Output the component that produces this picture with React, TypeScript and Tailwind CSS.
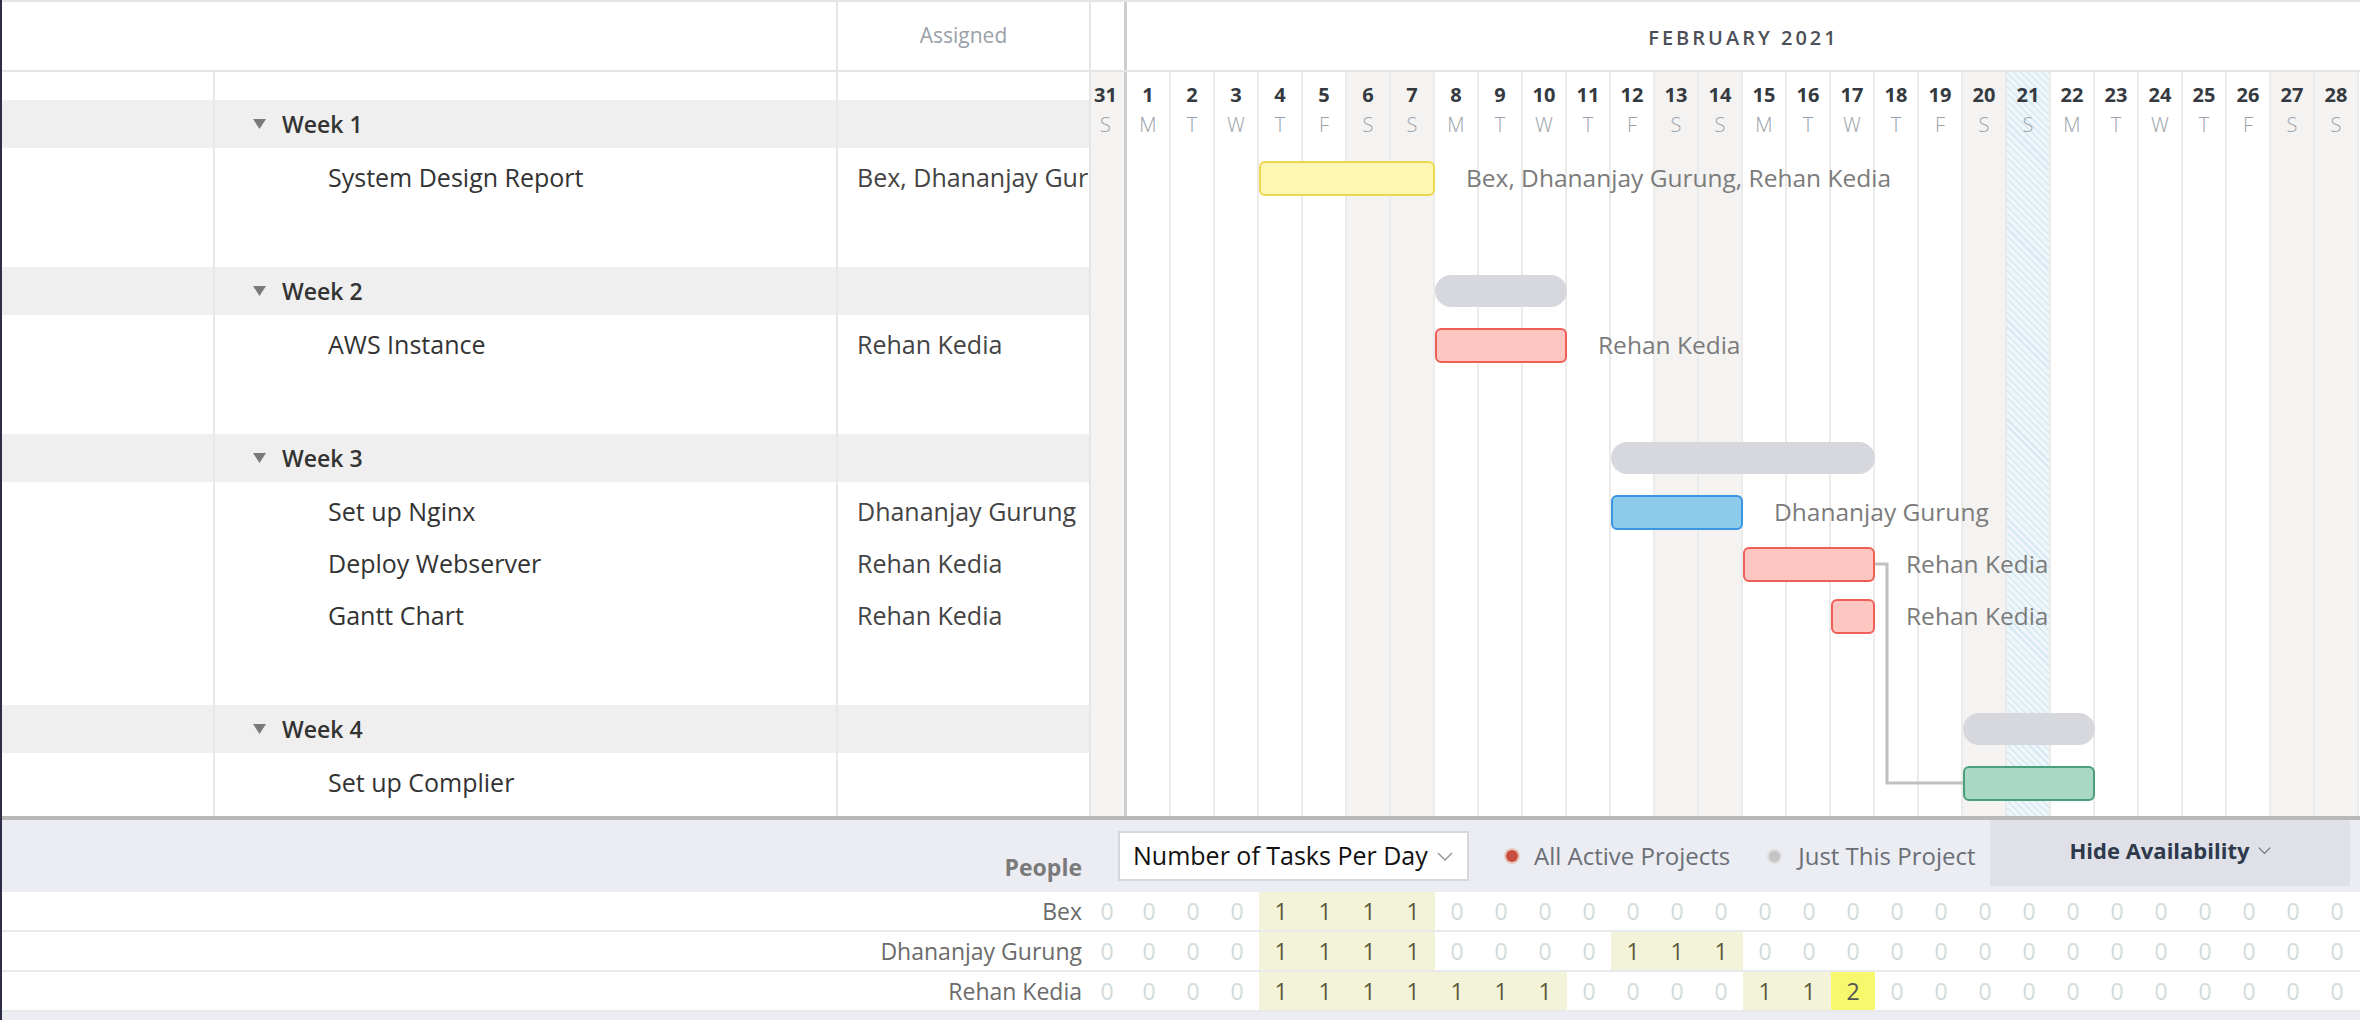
import { ReactElement } from "react";

type BarColor = "yellow" | "red" | "blue" | "green";

type Task = {
  name: string;
  assigned: string;
  start: number;
  end: number;
  color: BarColor;
};

type Group = {
  name: string;
  summary?: [number, number];
  tasks: Task[];
};

const FIRST = 36;
const DAY = 44;
const dayX = (d: number) => FIRST + (d - 1) * DAY;

const groups: Group[] = [
  {
    name: "Week 1",
    tasks: [
      {
        name: "System Design Report",
        assigned: "Bex, Dhananjay Gurung, Rehan Kedia",
        start: 4,
        end: 7,
        color: "yellow",
      },
    ],
  },
  {
    name: "Week 2",
    summary: [8, 10],
    tasks: [{ name: "AWS Instance", assigned: "Rehan Kedia", start: 8, end: 10, color: "red" }],
  },
  {
    name: "Week 3",
    summary: [12, 17],
    tasks: [
      { name: "Set up Nginx", assigned: "Dhananjay Gurung", start: 12, end: 14, color: "blue" },
      { name: "Deploy Webserver", assigned: "Rehan Kedia", start: 15, end: 17, color: "red" },
      { name: "Gantt Chart", assigned: "Rehan Kedia", start: 17, end: 17, color: "red" },
    ],
  },
  {
    name: "Week 4",
    summary: [20, 22],
    tasks: [{ name: "Set up Complier", assigned: "", start: 20, end: 22, color: "green" }],
  },
];

const barClass: Record<BarColor, string> = {
  yellow: "bg-[#fff6b3] border-[#ecd84f]",
  red: "bg-[#fdc6c0] border-[#ef5f58]",
  blue: "bg-[#8dcbeb] border-[#3b95e2]",
  green: "bg-[#a9d8c4] border-[#4c9f7c]",
};

// index 0 is Jan 31, then Feb 1..28
const days = [
  { n: 31, l: "S" },
  ...Array.from({ length: 28 }, (_, i) => ({ n: i + 1, l: "MTWTFSS"[i % 7] })),
];

const load = (spans: [number, number][]) => {
  const a: number[] = Array(29).fill(0);
  spans.forEach(([s, e]) => {
    for (let d = s; d <= e; d++) a[d] += 1;
  });
  return a;
};

const people = [
  { name: "Bex", counts: load([[4, 7]]) },
  { name: "Dhananjay Gurung", counts: load([[4, 7], [12, 14]]) },
  { name: "Rehan Kedia", counts: load([[4, 10], [15, 17], [17, 17]]) },
];

const colBg = (i: number) => {
  if (i === 21) return "bg-[repeating-linear-gradient(45deg,#d6e9f3_0px,#d6e9f3_1.5px,#eff6fa_1.5px,#eff6fa_5px)]";
  if (i === 0 || i % 7 === 6 || i % 7 === 0) return "bg-[#f4f3f1]";
  return "bg-white";
};

const Triangle = () => (
  <svg width="13" height="10" viewBox="0 0 13 10">
    <polygon points="0,0 13,0 6.5,10" fill="#7a7a7a" />
  </svg>
);

const Chevron = ({ color, w = 16 }: { color: string; w?: number }) => (
  <svg width={w} height="9" viewBox="0 0 16 9">
    <polyline points="1,1 8,8 15,1" fill="none" stroke={color} strokeWidth="1.5" />
  </svg>
);

const GroupBlock = ({
  group,
  band,
  task,
}: {
  group: Group;
  band: ReactElement | null;
  task: (t: Task) => ReactElement | null;
}) => (
  <div>
    <div className="h-[48px] bg-[#efefef] flex items-center">{band}</div>
    <div className="pt-1 pb-[63px]">
      {group.tasks.map((t) => (
        <div key={t.name} className="h-[52px] flex items-center whitespace-nowrap overflow-hidden">
          {task(t)}
        </div>
      ))}
    </div>
  </div>
);

const LeftPanel = () => (
  <div className="w-[1089px] shrink-0 flex flex-col">
    <div className="h-[72px] flex border-y-2 border-[#e5e5e5]">
      <div className="w-[836px] border-r-2 border-[#e5e5e5]" />
      <div className="flex-1 border-r-2 border-[#e5e5e5] flex items-center justify-center text-[21px] text-[#9aa0a8]">
        Assigned
      </div>
    </div>
    <div className="h-[744px] flex overflow-hidden">
      <div className="w-[213px] border-r-2 border-[#e8e8e8]">
        <div className="h-[28px]" />
        {groups.map((g) => (
          <GroupBlock key={g.name} group={g} band={null} task={() => null} />
        ))}
      </div>
      <div className="w-[623px] border-r-2 border-[#e8e8e8]">
        <div className="h-[28px]" />
        {groups.map((g) => (
          <GroupBlock
            key={g.name}
            group={g}
            band={
              <div className="flex items-center pl-[38px] gap-[16px] text-[23px] font-semibold text-[#333]">
                <Triangle />
                <span>{g.name}</span>
              </div>
            }
            task={(t) => <span className="pl-[113px] text-[25px] text-[#333]">{t.name}</span>}
          />
        ))}
      </div>
      <div className="flex-1 border-r-2 border-[#e5e5e5] min-w-0">
        <div className="h-[28px]" />
        {groups.map((g) => (
          <GroupBlock
            key={g.name}
            group={g}
            band={null}
            task={(t) => <span className="pl-[19px] text-[25px] text-[#444]">{t.assigned}</span>}
          />
        ))}
      </div>
    </div>
  </div>
);

const Chart = () => (
  <div className="flex-1 flex flex-col min-w-0">
    <div className="h-[72px] flex border-y-2 border-[#e5e5e5]">
      <div className="w-[36px] border-r-[3px] border-[#cdcdcd]" />
      <div className="flex-1 flex items-center justify-center pt-1 text-[20px] font-semibold tracking-[3px] text-[#4d5058]">
        FEBRUARY 2021
      </div>
    </div>
    <div className="relative h-[744px] overflow-hidden">
      <div className="absolute inset-0 flex">
        {days.map((d, i) => (
          <div
            key={i}
            className={`h-full shrink-0 flex flex-col items-center pt-[10px] ${colBg(i)} ${
              i === 0 ? "w-[36px] border-r-[3px] border-[#cdcdcd] pr-[4px]" : "w-[44px] border-r-2 border-[#ebebeb]"
            }`}
          >
            <span className="leading-[26px] text-[20px] font-bold text-[#343a40]">{d.n}</span>
            <span className="leading-[34px] text-[20px] font-light text-[#9aa1aa]">{d.l}</span>
          </div>
        ))}
      </div>
      <div className="relative">
        <div className="h-[28px]" />
        {groups.map((g) => (
          <div key={g.name}>
            <div className="relative h-[48px]">
              {g.summary && (
                <div
                  className="absolute top-[8px] h-[32px] rounded-full bg-[#d7d8de]"
                  style={{ left: dayX(g.summary[0]), width: (g.summary[1] - g.summary[0] + 1) * DAY }}
                />
              )}
            </div>
            <div className="pt-1 pb-[63px]">
              {g.tasks.map((t) => (
                <div key={t.name} className="relative h-[52px]">
                  <div
                    className={`absolute top-[9px] h-[35px] rounded-[6px] border-2 ${barClass[t.color]}`}
                    style={{ left: dayX(t.start), width: (t.end - t.start + 1) * DAY }}
                  />
                  {t.assigned && (
                    <span
                      className="absolute top-0 h-full flex items-center whitespace-nowrap text-[24.5px] text-[#7b7b7b]"
                      style={{ left: dayX(t.end + 1) + 31 }}
                    >
                      {t.assigned}
                    </span>
                  )}
                </div>
              ))}
            </div>
          </div>
        ))}
      </div>
      <svg className="absolute left-0 top-0 pointer-events-none" width="1269" height="744">
        <path d="M784 492 H796 V711 H872" fill="none" stroke="#c0c0c0" strokeWidth="3" />
      </svg>
    </div>
  </div>
);

const Availability = () => (
  <div className="border-t-4 border-[#b9b9b9]">
    <div className="h-[72px] flex bg-[#ecedf2]">
      <div className="w-[1089px] shrink-0 flex items-center justify-end pt-[22px] pr-[9px] text-[23px] font-bold text-[#7a7a7a]">
        People
      </div>
      <div className="flex-1 flex items-start min-w-0">
        <div className="ml-[27px] mt-[11px] w-[351px] h-[50px] shrink-0 bg-white border-2 border-[#d6d7dc] flex items-center pl-[13px] gap-[9px] text-[25px] text-[#111]">
          <span>Number of Tasks Per Day</span>
          <Chevron color="#9a9a9a" />
        </div>
        <div className="h-[72px] flex items-center shrink-0 whitespace-nowrap text-[24px] text-[#6a6e76]">
          <span className="ml-[37px] w-[12px] h-[12px] rounded-full bg-[#c9503d] ring-2 ring-[#e6c8c3]" />
          <span className="ml-[16px]">All Active Projects</span>
          <span className="ml-[39px] w-[11px] h-[11px] rounded-full bg-[#c4c4c4] ring-2 ring-[#dedede]" />
          <span className="ml-[18px]">Just This Project</span>
        </div>
        <div className="ml-auto mr-[10px] w-[360px] h-[66px] shrink-0 bg-[#dfe0e8] flex items-center justify-center gap-[8px] pb-[6px] text-[22px] font-bold text-[#2e3a4b]">
          <span>Hide Availability</span>
          <Chevron color="#6b7380" w={13} />
        </div>
      </div>
    </div>
    {people.map((p) => (
      <div key={p.name} className="h-[40px] flex border-b-2 border-[#e8e9ed] bg-white">
        <div className="w-[1089px] shrink-0 flex items-center justify-end pr-[9px] text-[23px] text-[#6b6b6b]">
          {p.name}
        </div>
        {p.counts.map((c, i) => (
          <div
            key={i}
            className={`h-full shrink-0 flex items-center justify-center text-[23px] ${
              i === 0 ? "w-[36px] pr-[4px]" : "w-[44px]"
            } ${c === 0 ? "text-[#d3dbdb]" : c === 1 ? "bg-[#f2f3d8] text-[#5b5a3b]" : "bg-[#f8f86c] text-[#555]"}`}
          >
            {c}
          </div>
        ))}
      </div>
    ))}
    <div className="h-[8px] bg-[#ecedf2]" />
  </div>
);

export default function App() {
  return (
    <div className="w-[2360px] h-[1020px] overflow-hidden bg-white border-l-2 border-[#2d2d45] font-['Open_Sans',sans-serif]">
      <div className="flex">
        <LeftPanel />
        <Chart />
      </div>
      <Availability />
    </div>
  );
}
